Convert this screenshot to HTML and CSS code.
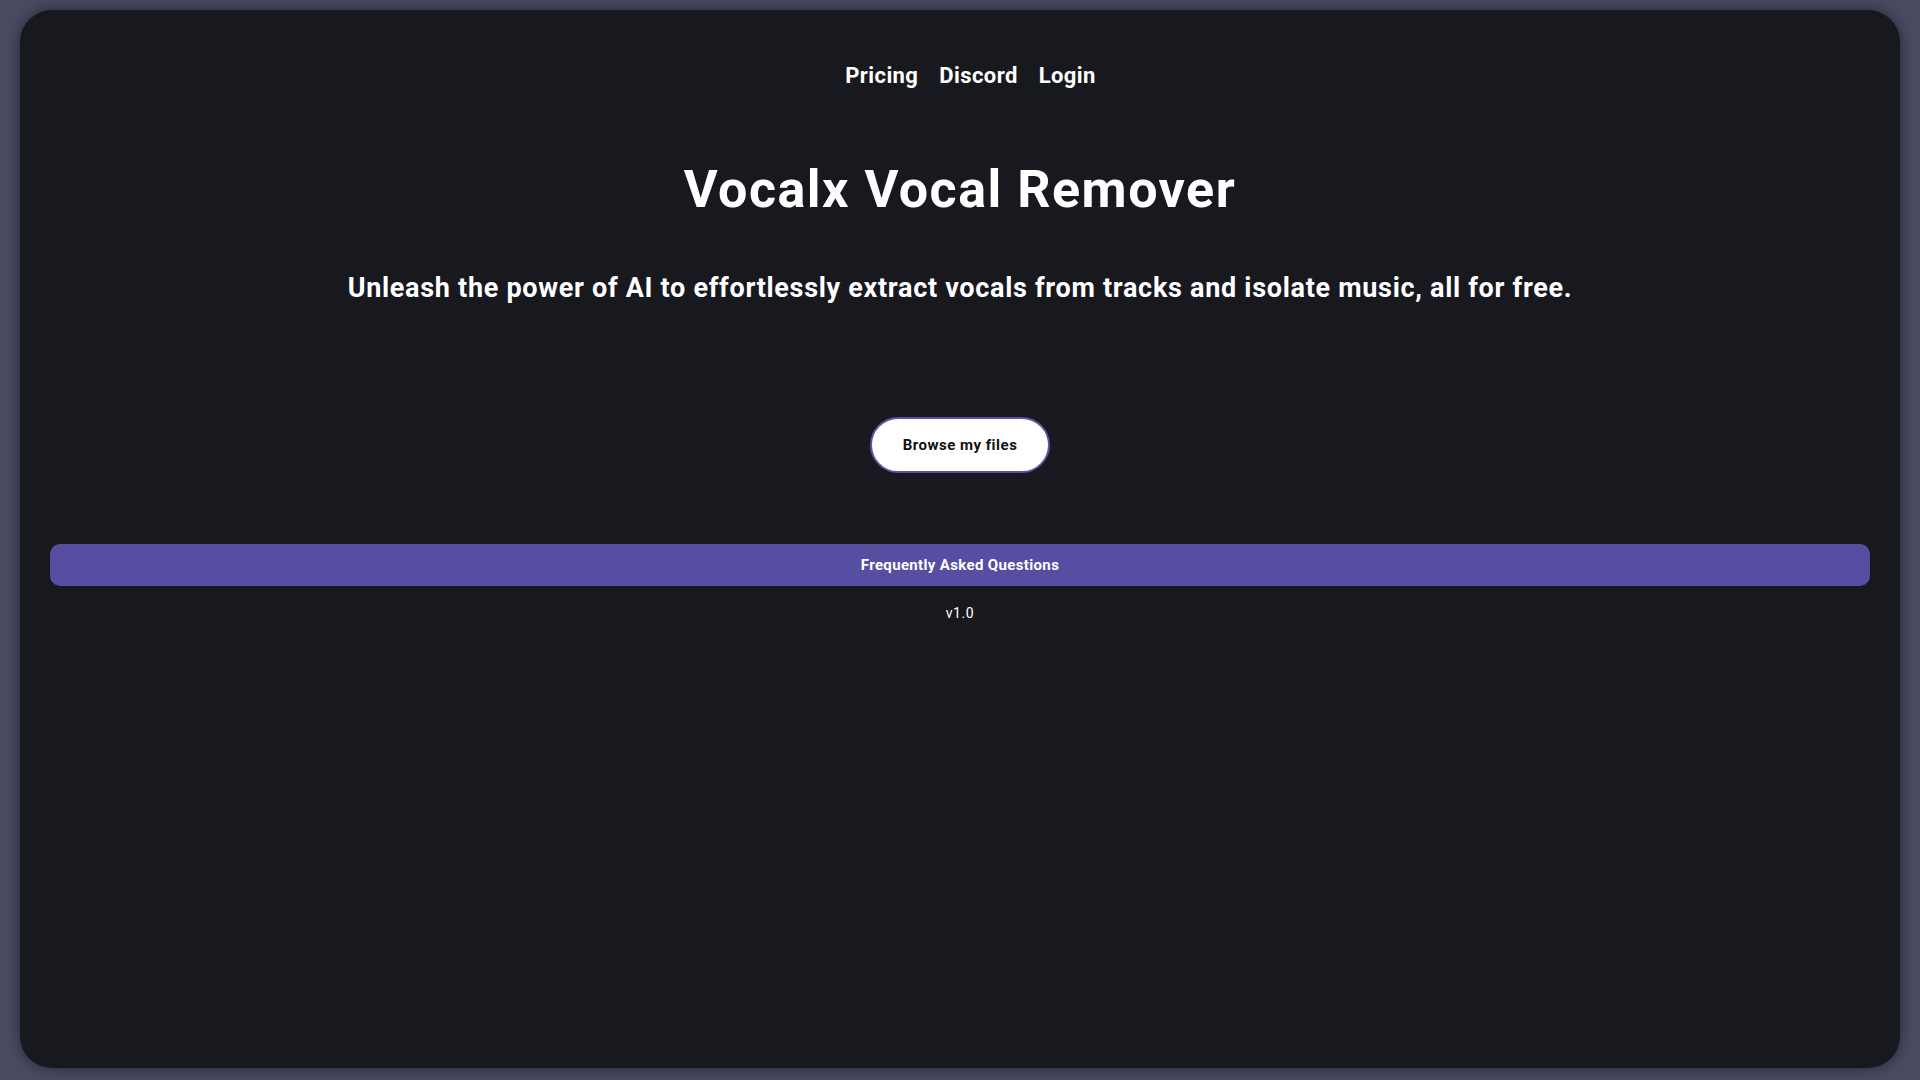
FILE: index.html
```html
<!DOCTYPE html>
<html lang="en">
<head>
<meta charset="utf-8">
<title>Vocalx Vocal Remover</title>
<link rel="stylesheet" href="styles.css">
</head>
<body>
<main class="card">
  <nav class="nav">
    <a class="nav-link" href="#">Pricing</a>
    <a class="nav-link" href="#">Discord</a>
    <a class="nav-link" href="#">Login</a>
  </nav>
  <h1 class="title">Vocalx Vocal Remover</h1>
  <p class="subtitle">Unleash the power of AI to effortlessly extract vocals from tracks and isolate music, all for free.</p>
  <button class="browse">Browse my files</button>
  <button class="faq">Frequently Asked Questions</button>
  <div class="version">v1.0</div>
</main>
</body>
</html>
```
FILE: styles.css
```css
html, body {
  margin: 0;
  height: 100%;
}
body {
  background: #4a4a62;
  padding: 10px 20px 12px;
  box-sizing: border-box;
  font-family: Roboto, "Liberation Sans", sans-serif;
  color: #ffffff;
}
.card {
  height: 100%;
  box-sizing: border-box;
  background: #18191f;
  border-radius: 32px;
  box-shadow: 0 0 14px rgba(10, 10, 20, 0.55);
  display: flex;
  flex-direction: column;
  align-items: center;
  padding: 51px 30px 0;
}
.nav {
  display: flex;
  gap: 21px;
  line-height: 30px;
  padding-left: 21px;
}
.nav-link {
  color: #ffffff;
  text-decoration: none;
  font-weight: 700;
  font-size: 22px;
  letter-spacing: 0.4px;
}
.title {
  margin: 67px 0 0;
  font-size: 52px;
  line-height: 64px;
  font-weight: 700;
  letter-spacing: 1.5px;
}
.subtitle {
  margin: 48px 0 0;
  font-size: 27px;
  line-height: 36px;
  font-weight: 700;
  letter-spacing: 0.7px;
}
.browse {
  margin-top: 111px;
  width: 180px;
  height: 56px;
  border-radius: 28px;
  border: 2px solid #5b50a8;
  background: #ffffff;
  color: #111111;
  font-family: inherit;
  font-size: 15px;
  font-weight: 700;
  letter-spacing: 0.5px;
  cursor: pointer;
}
.faq {
  margin-top: 71px;
  align-self: stretch;
  height: 42px;
  border: none;
  border-radius: 10px;
  background: #554ea1;
  color: #ffffff;
  font-family: inherit;
  font-size: 15px;
  font-weight: 700;
  letter-spacing: 0.35px;
  cursor: pointer;
}
.version {
  margin-top: 17px;
  font-size: 14px;
  line-height: 20px;
  letter-spacing: 0.6px;
}
```
